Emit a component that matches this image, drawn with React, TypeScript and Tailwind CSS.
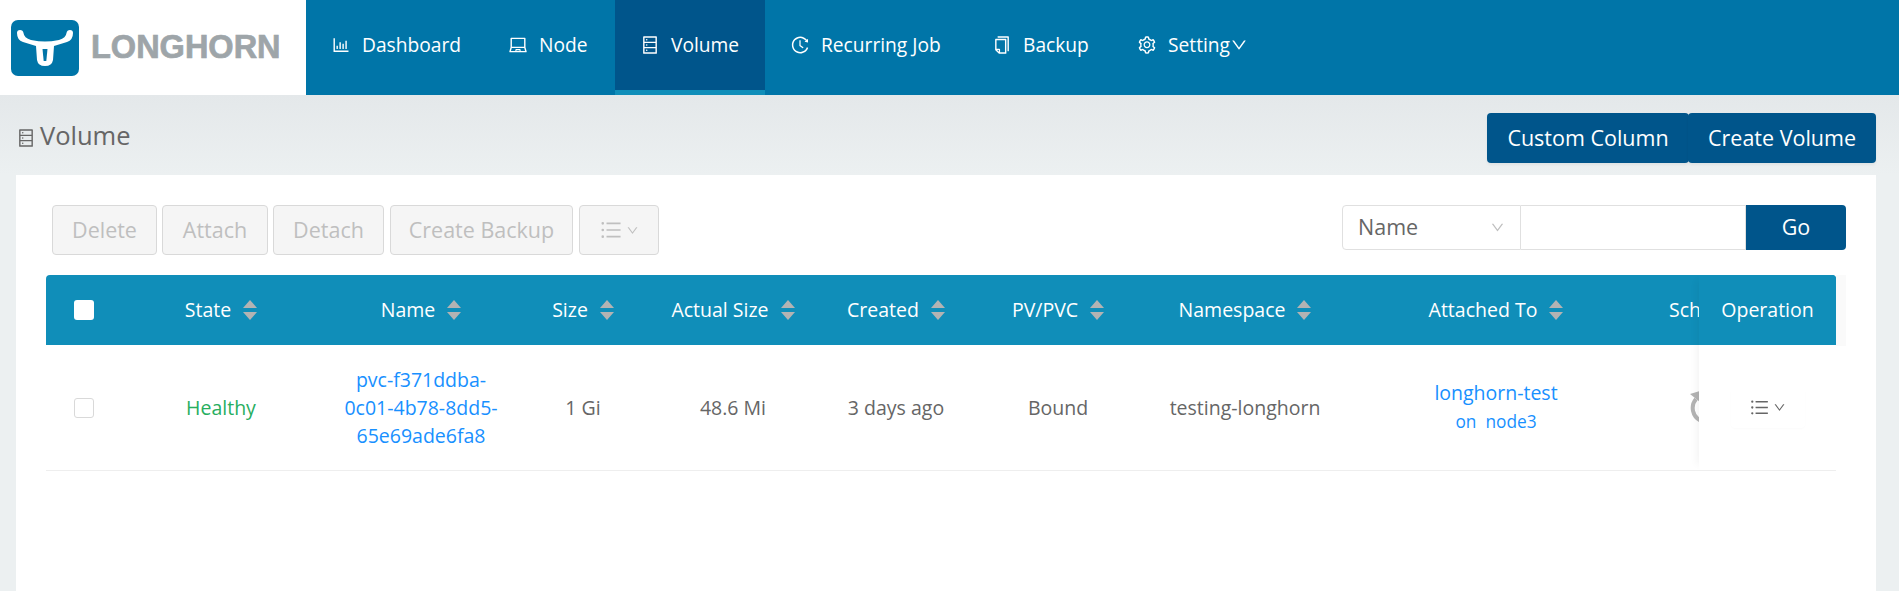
import React from 'react';
import {
  AiOutlineBarChart,
  AiOutlineLaptop,
  AiOutlineDatabase,
  AiOutlineHistory,
  AiOutlineCopy,
  AiOutlineSetting,
  AiOutlineDown,
  AiOutlineBars,
} from 'react-icons/ai';

const NAV = [
  { label: 'Dashboard', Icon: AiOutlineBarChart, width: 'w-[177px]' },
  { label: 'Node', Icon: AiOutlineLaptop, width: 'w-[132px]' },
  { label: 'Volume', Icon: AiOutlineDatabase, width: 'w-[150px]', active: true },
  { label: 'Recurring Job', Icon: AiOutlineHistory, width: 'w-[202px]' },
  { label: 'Backup', Icon: AiOutlineCopy, width: 'w-[145px]' },
  { label: 'Setting', Icon: AiOutlineSetting, width: 'w-[140px]', caret: true },
];

const COLUMNS = [
  { label: 'State', width: 'w-[198px]' },
  { label: 'Name', width: 'w-[202px]' },
  { label: 'Size', width: 'w-[122px]' },
  { label: 'Actual Size', width: 'w-[178px]' },
  { label: 'Created', width: 'w-[148px]' },
  { label: 'PV/PVC', width: 'w-[176px]' },
  { label: 'Namespace', width: 'w-[198px]' },
  { label: 'Attached To', width: 'w-[304px]' },
];

function Sorter() {
  return (
    <span className="ml-3 flex flex-col gap-[4px]">
      <span className="h-0 w-0 border-x-[7px] border-b-[8px] border-x-transparent border-b-[#b3b3b3]" />
      <span className="h-0 w-0 border-x-[7px] border-t-[8px] border-x-transparent border-t-[#b3b3b3]" />
    </span>
  );
}

function Logo() {
  return (
    <svg viewBox="0 0 68 56" className="h-[56px] w-[68px] shrink-0">
      <rect width="68" height="56" rx="7" fill="#0075a8" />
      <path
        d="M6 13 Q6 10 9 10 Q12 10 12.500 13 Q13 18 20 20 Q28 21.500 34 21.500 Q40 21.500 48 20 Q55 18 55.500 13 Q56 10 59 10 Q62 10 62 13 Q62 20 56 22 L43 26 L42 40 Q41 46 34 46 Q27 46 26 40 L25 26 L12 22 Q6 20 6 13 Z"
        fill="#fff"
      />
      <path d="M31.500 29 L36.500 29 L35.300 41 L32.700 41 Z" fill="#0075a8" />
    </svg>
  );
}

function ReloadMark() {
  return (
    <svg viewBox="0 0 34 34" className="h-[34px] w-[34px] shrink-0" fill="none">
      <path d="M6 8 A14 14 0 1 0 17 3" stroke="#b3b3b3" strokeWidth="4" />
      <path d="M0 3 L10 0 L10 11 Z" fill="#b3b3b3" />
    </svg>
  );
}

export default function App() {
  return (
    <div className="flex h-[591px] w-[1899px] flex-col overflow-hidden bg-[#ecf0f1] font-['Open_Sans',sans-serif] text-[19.500px] text-[#666]">
      {/* Top nav */}
      <header className="flex h-[95px] shrink-0 bg-[#0075a8] text-white">
        <div className="flex w-[306px] items-center gap-[12px] bg-white pl-[11px]">
          <Logo />
          <span className="font-['Liberation_Sans',sans-serif] text-[32.500px] font-bold text-[#9ea5a9] [-webkit-text-stroke:0.7px_#9ea5a9]">LONGHORN</span>
        </div>
        {NAV.map(({ label, Icon, width, active, caret }) => (
          <div
            key={label}
            className={`flex items-center pl-[25px] text-[19.200px] ${width} ${active ? 'border-b-[5px] border-[#108eb9] bg-[#00558b]' : 'pb-[5px]'}`}
          >
            <Icon className="mr-[11px] h-[20px] w-[20px]" />
            <span>{label}</span>
            {caret && <AiOutlineDown className="h-[18px] w-[18px]" />}
          </div>
        ))}
      </header>

      {/* Title row */}
      <div className="flex h-[80px] shrink-0 items-start justify-between bg-gradient-to-b from-[#e4e8ea] to-[#ecf0f1] pl-[16px] pr-[23px] pt-[18px]">
        <div className="flex items-center gap-[4px] pt-[3px] text-[25.500px] text-[#666]">
          <AiOutlineDatabase className="mt-[6px] h-[20px] w-[20px]" />
          <span>Volume</span>
        </div>
        <div className="flex text-[21.500px] text-white">
          <button className="h-[50px] w-[202px] rounded-[4px] bg-[#00558b] shadow-[0_2px_3px_rgba(0,0,0,0.05)]">Custom Column</button>
          <button className="-ml-[1px] h-[50px] w-[188px] rounded-[4px] bg-[#00558b] shadow-[0_2px_3px_rgba(0,0,0,0.05)]">Create Volume</button>
        </div>
      </div>

      {/* Panel */}
      <main className="ml-[16px] w-[1860px] grow bg-white pl-[30px] pt-[30px]">
        <div className="flex h-[50px] w-[1800px] items-start justify-between pl-[6px] text-[21.500px]">
          <div className="flex gap-[5px] text-[#bfbfbf]">
            <button className="h-[50px] w-[105px] rounded-[4px] border border-[#d9d9d9] bg-[#f5f5f5]">Delete</button>
            <button className="h-[50px] w-[106px] rounded-[4px] border border-[#d9d9d9] bg-[#f5f5f5]">Attach</button>
            <button className="h-[50px] w-[111px] rounded-[4px] border border-[#d9d9d9] bg-[#f5f5f5]">Detach</button>
            <button className="ml-[1px] h-[50px] w-[183px] rounded-[4px] border border-[#d9d9d9] bg-[#f5f5f5]">Create Backup</button>
            <button className="ml-[1px] flex h-[50px] w-[80px] items-center justify-center gap-[3px] rounded-[4px] border border-[#d9d9d9] bg-[#f5f5f5]">
              <AiOutlineBars className="h-[24px] w-[24px]" />
              <AiOutlineDown className="h-[13px] w-[13px]" />
            </button>
          </div>
          <div className="flex h-[45px]">
            <div className="flex w-[179px] items-center justify-between rounded-l-[4px] border border-[#e0e0e0] pl-[15px] pr-[15px]">
              <span>Name</span>
              <AiOutlineDown className="h-[15px] w-[15px] text-[#bfbfbf]" />
            </div>
            <div className="w-[225px] border-y border-r border-[#e0e0e0]" />
            <button className="w-[100px] rounded-r-[4px] bg-[#00558b] text-white">Go</button>
          </div>
        </div>

        {/* Table */}
        <div className="relative mt-[20px] w-[1800px]">
          <div className="w-[1790px]">
            <div className="flex h-[70px] rounded-t-[4px] bg-[#108eb9] text-white">
              <div className="flex w-[76px] shrink-0 items-center justify-center">
                <span className="h-[20px] w-[20px] rounded-[3px] bg-white" />
              </div>
              {COLUMNS.map((c) => (
                <div key={c.label} className={`flex shrink-0 items-center justify-center ${c.width}`}>
                  <span>{c.label}</span>
                  <Sorter />
                </div>
              ))}
              <div className="flex w-[51px] shrink-0 items-center whitespace-nowrap pl-[21px]">Sch</div>
            </div>
            <div className="flex h-[126px] items-center border-b border-[#eee]">
              <div className="flex w-[76px] shrink-0 items-center justify-center">
                <span className="h-[20px] w-[20px] rounded-[3px] border border-[#d9d9d9]" />
              </div>
              <div className="w-[198px] shrink-0 text-center text-[#27ae60]">Healthy</div>
              <div className="w-[202px] shrink-0 px-[20px] text-center leading-[28px] text-[#1890ff]">pvc-f371ddba-0c01-4b78-8dd5-65e69ade6fa8</div>
              <div className="w-[122px] shrink-0 text-center">1 Gi</div>
              <div className="w-[178px] shrink-0 text-center">48.6 Mi</div>
              <div className="w-[148px] shrink-0 text-center">3 days ago</div>
              <div className="w-[176px] shrink-0 text-center">Bound</div>
              <div className="w-[198px] shrink-0 text-center">testing-longhorn</div>
              <div className="w-[304px] shrink-0 pb-[2px] text-center text-[#1890ff]">
                <div className="leading-[29px]">longhorn-test</div>
                <div className="text-[17.300px] leading-[29px]">on&nbsp; node3</div>
              </div>
              <div className="w-[51px] shrink-0 overflow-hidden pl-[42px]">
                <ReloadMark />
              </div>
            </div>
          </div>
          {/* Fixed operation column */}
          <div className="absolute left-[1653px] top-0 h-[195px] w-[137px] shadow-[-8px_0_8px_-6px_rgba(0,0,0,0.05)]">
            <div className="flex h-[70px] items-center justify-center rounded-tr-[4px] bg-[#108eb9] text-white">Operation</div>
            <div className="flex h-[125px] items-center justify-center bg-white">
              <div className="flex h-[40px] w-[74px] items-center justify-center gap-[3px] rounded-[4px] shadow-[0_1px_2px_rgba(0,0,0,0.02)]">
                <AiOutlineBars className="h-[21px] w-[21px]" />
                <AiOutlineDown className="h-[13px] w-[13px]" />
              </div>
            </div>
          </div>
          <div className="absolute left-[1790px] top-0 h-[71px] w-[10px] bg-[#fafafa]" />
        </div>
      </main>
    </div>
  );
}
